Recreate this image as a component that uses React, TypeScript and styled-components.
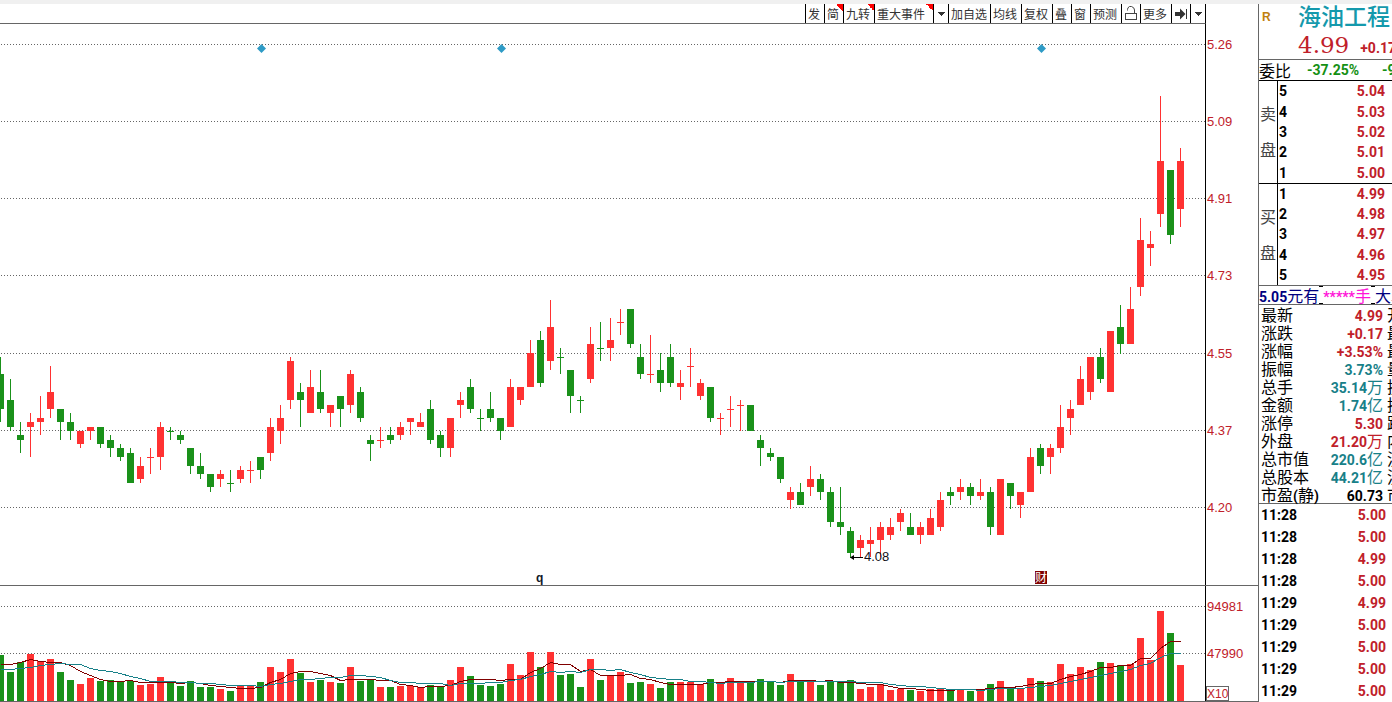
import React from "react";
import styled, { createGlobalStyle } from "styled-components";

const UP = "#ff3232";
const DOWN = "#1a911a";
const RED = "#c0202a";
const TEAL = "#178088";
const GREEN = "#149014";
const LINE = "#666666";
const CJK = '"Noto Sans CJK SC", sans-serif';
const NUM = 'Roboto, "Noto Sans CJK SC", sans-serif';

const GlobalStyle = createGlobalStyle`
  * { box-sizing: border-box; }
  body { margin: 0; background: #ffffff; color: #000000; font-family: ${CJK}; overflow-x: hidden; }
  table { border-collapse: collapse; table-layout: fixed; }
  th, td { padding: 0; text-align: left; font-weight: 400; white-space: nowrap; }
`;

/* ---------- data ---------- */

type Candle = [up: 0 | 1, high: number, top: number, bottom: number, low: number, volume: number];

const candles: Candle[] = [
  [0, 357, 374, 409, 422, 655], [0, 379, 400, 427, 431, 672], [0, 422, 435, 440, 453, 662],
  [1, 413, 422, 427, 457, 654], [1, 396, 418, 422, 435, 661], [1, 366, 392, 409, 418, 659],
  [0, 409, 409, 422, 440, 672], [0, 413, 422, 431, 440, 680], [1, 431, 431, 444, 448, 684],
  [1, 427, 427, 431, 440, 678], [0, 427, 427, 444, 448, 681], [0, 435, 440, 448, 457, 680],
  [0, 444, 448, 457, 461, 682], [0, 448, 453, 483, 483, 681], [1, 457, 466, 479, 483, 685],
  [1, 448, 457, 458, 474, 684], [1, 422, 427, 457, 470, 677], [0, 427, 431, 432, 440, 682],
  [0, 431, 435, 440, 444, 686], [0, 448, 448, 466, 474, 681], [0, 453, 466, 474, 479, 687],
  [0, 474, 474, 487, 492, 687], [1, 470, 474, 479, 487, 689], [0, 470, 483, 484, 492, 691],
  [1, 466, 470, 479, 483, 686], [1, 461, 470, 471, 483, 686], [0, 457, 457, 470, 479, 682],
  [1, 418, 427, 453, 461, 667], [1, 405, 418, 431, 444, 672], [1, 357, 361, 400, 409, 659],
  [0, 383, 392, 400, 427, 673], [1, 370, 387, 413, 413, 682], [0, 370, 392, 409, 413, 680],
  [1, 405, 405, 413, 427, 682], [0, 396, 396, 409, 427, 683], [1, 370, 374, 405, 413, 667],
  [0, 387, 392, 418, 422, 681], [0, 435, 440, 444, 461, 680], [1, 427, 440, 441, 448, 687],
  [0, 427, 435, 440, 444, 687], [1, 422, 427, 435, 440, 686], [1, 418, 418, 422, 435, 686],
  [1, 413, 422, 427, 427, 687], [0, 400, 409, 440, 444, 685], [0, 431, 435, 448, 457, 686],
  [1, 418, 418, 448, 457, 680], [1, 392, 400, 405, 418, 667], [0, 379, 387, 409, 413, 676],
  [0, 409, 418, 419, 431, 685], [0, 392, 409, 418, 422, 686], [0, 418, 418, 431, 440, 684],
  [1, 379, 387, 427, 427, 664], [1, 387, 387, 400, 405, 675], [1, 340, 353, 387, 387, 652],
  [0, 331, 340, 383, 387, 667], [1, 300, 327, 361, 370, 652], [0, 348, 357, 358, 374, 675],
  [0, 370, 370, 396, 413, 674], [0, 396, 400, 401, 413, 687], [1, 327, 344, 379, 383, 659],
  [0, 322, 348, 349, 361, 680], [1, 318, 340, 348, 361, 675], [1, 309, 322, 323, 335, 672],
  [0, 309, 309, 344, 348, 683], [0, 344, 357, 374, 379, 682], [1, 335, 374, 375, 383, 684],
  [0, 353, 370, 383, 392, 688], [0, 344, 357, 383, 387, 682], [1, 370, 383, 387, 400, 682],
  [1, 348, 366, 367, 387, 682], [1, 379, 383, 396, 400, 684], [0, 387, 387, 418, 422, 679],
  [1, 413, 418, 419, 435, 683], [1, 396, 409, 410, 427, 678], [1, 400, 405, 406, 431, 682],
  [0, 405, 405, 431, 431, 682], [0, 435, 440, 448, 466, 679], [0, 448, 453, 457, 461, 682],
  [0, 457, 457, 479, 483, 685], [1, 487, 492, 500, 509, 674], [0, 483, 492, 505, 505, 681],
  [1, 466, 479, 487, 496, 680], [0, 474, 479, 492, 500, 685], [0, 487, 492, 522, 527, 681],
  [0, 487, 522, 527, 535, 682], [0, 527, 531, 553, 558, 680], [1, 535, 540, 548, 557, 689],
  [1, 527, 540, 544, 557, 687], [1, 522, 527, 540, 557, 684], [1, 518, 527, 535, 540, 690],
  [1, 509, 513, 522, 531, 689], [0, 513, 527, 535, 535, 690], [1, 522, 527, 535, 544, 691],
  [1, 509, 518, 535, 535, 689], [1, 492, 500, 527, 531, 689], [0, 487, 492, 496, 505, 689],
  [1, 479, 487, 492, 500, 689], [0, 483, 487, 496, 505, 691], [1, 479, 492, 496, 500, 689],
  [0, 487, 492, 527, 535, 684], [1, 479, 479, 535, 535, 681], [0, 483, 483, 496, 509, 688],
  [1, 492, 492, 505, 518, 688], [1, 448, 457, 492, 492, 678], [0, 444, 448, 466, 474, 681],
  [1, 444, 448, 457, 474, 682], [1, 405, 427, 448, 453, 664], [1, 400, 409, 418, 435, 674],
  [1, 366, 379, 405, 405, 667], [1, 357, 357, 392, 400, 670], [0, 348, 357, 379, 383, 662],
  [1, 331, 331, 392, 392, 663], [0, 305, 327, 344, 354, 665], [1, 287, 309, 344, 344, 664],
  [1, 218, 240, 287, 296, 638], [1, 231, 244, 248, 266, 660], [1, 96, 161, 214, 227, 611],
  [0, 170, 170, 235, 244, 633], [1, 148, 161, 209, 227, 665],
];

const priceGrid: [number, string][] = [
  [44, "5.26"], [121, "5.09"], [198, "4.91"], [275, "4.73"], [353, "4.55"], [430, "4.37"], [507, "4.20"],
];
const volumeGrid: [number, string][] = [[606, "94981"], [653, "47990"]];

/* Moving average of the volume; `seed` holds the values whose window starts before the first bar. */
const average = (seed: number[], span: number) =>
  candles
    .map((_, i) => {
      const y =
        i < seed.length
          ? seed[i]
          : Math.round(candles.slice(i - span + 1, i + 1).reduce((sum, c) => sum + c[5], 0) / span);
      return `${i * 10},${y}`;
    })
    .join(" ");

const ma5 = average([664, 664, 662, 659], 5);
const ma10 = average([669, 669, 668, 667, 665, 664, 663, 664, 664], 10);

const asks = [["5", "5.04"], ["4", "5.03"], ["3", "5.02"], ["2", "5.01"], ["1", "5.00"]];
const bids = [["1", "4.99"], ["2", "4.98"], ["3", "4.97"], ["4", "4.96"], ["5", "4.95"]];

const stats: [string, string, string, string, string][] = [
  ["最新", "4.99", "", RED, "开"],
  ["涨跌", "+0.17", "", RED, "最"],
  ["涨幅", "+3.53%", "", RED, "最"],
  ["振幅", "3.73%", "", TEAL, "量"],
  ["总手", "35.14", "万", TEAL, "换"],
  ["金额", "1.74", "亿", TEAL, "换"],
  ["涨停", "5.30", "", RED, "跌"],
  ["外盘", "21.20", "万", RED, "内"],
  ["总市值", "220.6", "亿", TEAL, "流"],
  ["总股本", "44.21", "亿", TEAL, "流"],
  ["市盈(静)", "60.73", "", "#000000", "市"],
];

const trades = [
  ["11:28", "5.00"], ["11:28", "5.00"], ["11:28", "4.99"], ["11:28", "5.00"], ["11:29", "4.99"],
  ["11:29", "5.00"], ["11:29", "5.00"], ["11:29", "5.00"], ["11:29", "5.00"],
];

/* ---------- styled parts ---------- */

const Page = styled.div`
  min-height: 100vh;
  overflow: hidden;
`;
const TopStrip = styled.div`
  height: 4px;
  background: #f0f0f0;
`;
const Workspace = styled.main`
  display: grid;
  grid-template-columns: minmax(0, 1fr) 134px;
  align-items: stretch;
`;
const ChartColumn = styled.section`
  min-width: 0;
`;
const ToolbarRow = styled.div`
  display: flex;
  padding-right: 52px;
`;
const Toolbar = styled.div`
  flex: 1;
  display: flex;
  justify-content: flex-end;
  height: 20px;
  border-bottom: 1px solid ${LINE};
  border-right: 1px solid #000000;
`;
const ToolButton = styled.button<{ $width: number; $flag?: boolean; $icon?: boolean }>`
  display: flex;
  align-items: center;
  justify-content: ${(p) => (p.$icon ? "center" : "flex-start")};
  flex: none;
  width: ${(p) => p.$width}px;
  height: 19px;
  padding: 0 0 0 ${(p) => (p.$icon ? 0 : 2)}px;
  border: 0;
  border-left: 1px solid #000000;
  background: ${(p) =>
    p.$flag ? "linear-gradient(45deg, transparent 50%, #ff0000 50%) top right / 7px 7px no-repeat #ffffff" : "#ffffff"};
  color: #333333;
  font: 400 12px/19px ${CJK};
  white-space: nowrap;
`;
const ChartPanel = styled.div`
  border-bottom: 1px solid ${LINE};
`;
const Plot = styled.svg`
  display: block;
  width: 100%;
  height: auto;
  font-family: "Liberation Sans", Arial, sans-serif;
  font-size: 13px;
`;
const Side = styled.aside`
  overflow: hidden;
  border-left: 1px solid ${LINE};
`;
const Section = styled.div<{ $line?: string }>`
  border-bottom: ${(p) => (p.$line ? `1px solid ${p.$line}` : "0")};
`;
const Quote = styled(Section)`
  display: grid;
  grid-template-columns: 39px 1fr;
  grid-template-rows: 22px 33px;
  align-items: end;
`;
const Flag = styled.span`
  padding-left: 3px;
  color: #c08010;
  font: 700 12px/18px "Liberation Sans", sans-serif;
`;
const StockName = styled.h1`
  margin: 0;
  color: #1499ac;
  font: 500 23px/22px ${CJK};
  white-space: nowrap;
`;
const PriceLine = styled.div`
  grid-column: 2;
  display: flex;
  align-items: baseline;
  gap: 11px;
  white-space: nowrap;
`;
const BigPrice = styled.strong`
  color: ${RED};
  font: 400 23px/27px "DejaVu Serif", serif;
`;
const Num = styled.span<{ $color?: string }>`
  color: ${(p) => p.$color ?? "inherit"};
  font: 700 14px/12px ${NUM};
`;
const RatioRow = styled(Section)`
  display: flex;
  align-items: center;
  gap: 16px;
  height: 21px;
  font-size: 16px;
  line-height: 20px;
  white-space: nowrap;
`;
const Book = styled(Section)`
  display: grid;
  grid-template-columns: 19px 1fr;
`;
const BookSide = styled.div`
  display: flex;
  flex-direction: column;
  justify-content: center;
  align-items: center;
  gap: 16px;
  padding-bottom: 2px;
  border-right: 1px solid #000000;
  color: #444444;
  font-size: 16px;
  line-height: 20px;
`;
const BookTable = styled.table<{ $height: number }>`
  width: 107px;
  height: ${(p) => p.$height}px;
  font: 700 14px/18px ${NUM};
  th { padding-left: 1px; font-weight: 700; }
  td { color: ${RED}; font-weight: 700; text-align: right; }
`;
const Notice = styled(Section)`
  display: flex;
  align-items: center;
  height: 19px;
  color: #000080;
  font-size: 16px;
  line-height: 18px;
  white-space: nowrap;
`;
const Magenta = styled.span`
  color: #ff14d8;
`;
const Ticks = styled.i`
  flex: none;
  align-self: stretch;
  width: 4px;
  border-top: 1px solid #000000;
  border-bottom: 1px solid #000000;
`;
const StatsTable = styled.table`
  width: 144px;
  font-size: 16px;
  line-height: 18px;
  tr { height: 18px; }
  th { width: 56px; padding-left: 2px; }
  td { width: 16px; }
`;
const StatCell = styled.td<{ $color: string }>`
  && { width: 72px; padding-right: 4px; text-align: right; }
  color: ${(p) => p.$color};
`;
const TradeTable = styled.table`
  width: 127px;
  font: 700 14px/18px ${NUM};
  tr { height: 22px; }
  th { padding-left: 2px; font-weight: 700; }
  td { color: ${RED}; text-align: right; font-weight: 700; }
`;

/* ---------- icons ---------- */

const Caret = () => (
  <svg width="7" height="4" viewBox="0 0 7 4" shapeRendering="crispEdges" aria-hidden="true">
    <path d="M0 0h7L3.5 4z" fill="#333333" />
  </svg>
);
const LockIcon = () => (
  <svg width="12" height="15" viewBox="0 0 12 15" fill="none" stroke="#444444" aria-hidden="true">
    <rect x="0.5" y="7.5" width="11" height="6" />
    <path d="M2.5 4.5V3.500Q2.500 1.500 4.500 0.500h2Q9.500 1.500 9.500 4v3.500" />
  </svg>
);
const JumpIcon = () => (
  <svg width="13" height="12" viewBox="0 0 13 12" fill="#333333" aria-hidden="true">
    <path d="M0 4h5V0.500L10.500 6 5 11.500V8H0zM11 1h1v10h-1z" />
  </svg>
);

/* ---------- charts ---------- */

const GridLines = ({ lines }: { lines: [number, string][] }) => (
  <>
    {lines.map(([y, label]) => (
      <g key={label}>
        <line x1="1" x2="1205" y1={y + 0.5} y2={y + 0.5} stroke={LINE} strokeDasharray="1 2" shapeRendering="crispEdges" />
        <text x="1207" y={y + 5} fill={RED}>{label}</text>
      </g>
    ))}
  </>
);

const PriceChart = () => (
  <Plot viewBox="0 24 1258 561" role="img" aria-label="日K线">
    <GridLines lines={priceGrid} />
    <g shapeRendering="crispEdges">
      {candles.map(([up, high, top, bottom, low], i) => (
        <g key={i} fill={up ? UP : DOWN}>
          <rect x={i * 10} y={high} width="1" height={low - high} />
          <rect x={i * 10 - 3} y={top} width="7" height={bottom - top} />
        </g>
      ))}
      <rect x="1205" y="24" width="1" height="561" fill="#000000" />
    </g>
    {[261, 501, 1041].map((x) => (
      <path key={x} d={`M${x + 0.5} 44l4.500 4.500-4.500 4.500-4.500-4.500z`} fill="#2e9bc6" />
    ))}
    <path d="M850 557.500l4-2.500v2h9v1h-9v2z" fill="#000000" />
    <text x="864" y="561" fill="#101018">4.08</text>
    <text x="536" y="582" fill="#101828" fontWeight="700" fontSize="12">q</text>
    <rect x="1035" y="571" width="12" height="13" fill="#800000" />
    <text x="1035" y="582" fill="#ffffff" fontSize="12" fontFamily="Noto Sans CJK SC, sans-serif">财</text>
  </Plot>
);

const VolumeChart = () => (
  <Plot viewBox="0 586 1258 115" role="img" aria-label="成交量">
    <GridLines lines={volumeGrid} />
    <g shapeRendering="crispEdges">
      {candles.map((c, i) => (
        <rect key={i} x={i * 10 - 3} y={c[5]} width="7" height={701 - c[5]} fill={c[0] ? UP : DOWN} />
      ))}
      <rect x="1205" y="586" width="1" height="115" fill="#000000" />
      <g fill="none" transform="translate(0.5 0.5)">
        <polyline points={ma5} stroke="#800000" />
        <polyline points={ma10} stroke="#178088" />
      </g>
      <rect x="1206.500" y="686.500" width="22" height="14" fill="#ffffff" stroke={LINE} />
    </g>
    <text x="1207" y="698" fill={RED} fontSize="12">X10</text>
  </Plot>
);

/* ---------- side panel ---------- */

const BookHalf = ({ title, rows, height, line }: { title: string; rows: string[][]; height: number; line: string }) => (
  <Book $line={line}>
    <BookSide>
      {title.split("").map((ch) => <span key={ch}>{ch}</span>)}
    </BookSide>
    <BookTable $height={height}>
      <tbody>
        {rows.map(([level, price]) => (
          <tr key={level}>
            <th scope="row">{level}</th>
            <td>{price}</td>
          </tr>
        ))}
      </tbody>
    </BookTable>
  </Book>
);

export default function App() {
  return (
    <Page>
      <GlobalStyle />
      <TopStrip />
      <Workspace>
        <ChartColumn>
          <ToolbarRow>
            <Toolbar role="toolbar">
              <ToolButton $width={19}>发</ToolButton>
              <ToolButton $width={19} $flag>简</ToolButton>
              <ToolButton $width={31} $flag>九转</ToolButton>
              <ToolButton $width={59} $flag>重大事件</ToolButton>
              <ToolButton $width={15} $icon aria-label="事件菜单"><Caret /></ToolButton>
              <ToolButton $width={42}>加自选</ToolButton>
              <ToolButton $width={31}>均线</ToolButton>
              <ToolButton $width={31}>复权</ToolButton>
              <ToolButton $width={19}>叠</ToolButton>
              <ToolButton $width={19}>窗</ToolButton>
              <ToolButton $width={31}>预测</ToolButton>
              <ToolButton $width={19} $icon aria-label="锁定"><LockIcon /></ToolButton>
              <ToolButton $width={31}>更多</ToolButton>
              <ToolButton $width={19} $icon aria-label="最新"><JumpIcon /></ToolButton>
              <ToolButton $width={15} $icon aria-label="菜单"><Caret /></ToolButton>
            </Toolbar>
          </ToolbarRow>
          <ChartPanel><PriceChart /></ChartPanel>
          <ChartPanel><VolumeChart /></ChartPanel>
        </ChartColumn>

        <Side>
          <Quote $line={LINE}>
            <Flag>R</Flag>
            <StockName>海油工程</StockName>
            <PriceLine>
              <BigPrice>4.99</BigPrice>
              <Num $color={RED}>+0.17</Num>
            </PriceLine>
          </Quote>
          <RatioRow $line="#000000">
            <span>委比</span>
            <Num $color={GREEN}>-37.25%</Num>
            <Num $color={GREEN}>&nbsp;&nbsp;-9</Num>
          </RatioRow>
          <BookHalf title="卖盘" rows={asks} height={102} line="#000000" />
          <BookHalf title="买盘" rows={bids} height={101} line={LINE} />
          <Notice $line={LINE}>
            <span><Num>5.05</Num>元有</span>
            <Ticks />
            <Magenta><Num>*****</Num>手</Magenta>
            <Ticks />
            <span>大单</span>
          </Notice>
          <Section $line={LINE}>
            <StatsTable>
              <tbody>
                {stats.map(([label, value, unit, color, next]) => (
                  <tr key={label}>
                    <th scope="row">
                      {label.split(/([()])/).map((part, i) =>
                        part === "(" || part === ")" ? <Num key={i}>{part}</Num> : part
                      )}
                    </th>
                    <StatCell $color={color}><Num>{value}</Num>{unit}</StatCell>
                    <td>{next}</td>
                  </tr>
                ))}
              </tbody>
            </StatsTable>
          </Section>
          <TradeTable>
            <tbody>
              {trades.map(([time, price], i) => (
                <tr key={i}>
                  <th scope="row">{time}</th>
                  <td>{price}</td>
                </tr>
              ))}
            </tbody>
          </TradeTable>
        </Side>
      </Workspace>
    </Page>
  );
}
